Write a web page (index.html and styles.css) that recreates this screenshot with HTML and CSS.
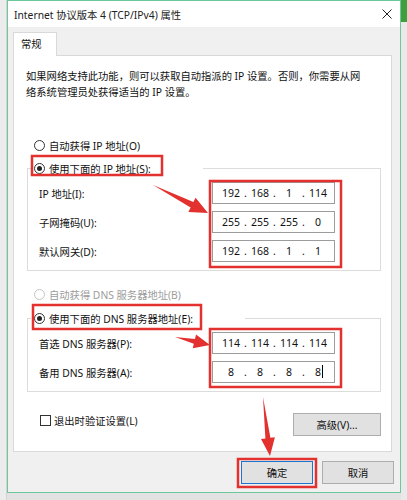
FILE: index.html
```html
<!DOCTYPE html>
<html lang="zh-CN">
<head>
  <meta charset="UTF-8" />
  <title>Internet 协议版本 4 (TCP/IPv4) 属性</title>
  <link rel="stylesheet" href="styles.css">
</head>
<body>
  <!-- window behind the dialog, left edge -->
  <div class="desk-left"></div>

  <!-- DIALOG -->
  <div class="dialog">
    <div class="titlebar">
      <span class="title">Internet 协议版本 4 (TCP/IPv4) 属性</span>
      <svg class="close" width="10" height="10" viewBox="0 0 10 10">
        <path d="M0.5 0.5 L9.5 9.5 M9.5 0.5 L0.5 9.5" stroke="#222" stroke-width="1" fill="none"/>
      </svg>
    </div>

    <div class="tabs">
      <div class="tab">常规</div>
    </div>

    <div class="panel">
      <p class="intro">如果网络支持此功能，则可以获取自动指派的 IP 设置。否则，你需要从网<br>络系统管理员处获得适当的 IP 设置。</p>

      <div class="radio-row first"><span class="radio"></span>自动获得 IP 地址(O)</div>

      <fieldset class="group">
        <legend class="ip-legend"><span class="radio on"></span>使用下面的 IP 地址(S):</legend>
        <div class="field">
          <label>IP 地址(I):</label>
          <div class="ipbox"><span>192</span><i>.</i><span>168</span><i>.</i><span>1</span><i>.</i><span>114</span></div>
        </div>
        <div class="field">
          <label>子网掩码(U):</label>
          <div class="ipbox"><span>255</span><i>.</i><span>255</span><i>.</i><span>255</span><i>.</i><span>0</span></div>
        </div>
        <div class="field">
          <label>默认网关(D):</label>
          <div class="ipbox"><span>192</span><i>.</i><span>168</span><i>.</i><span>1</span><i>.</i><span>1</span></div>
        </div>
      </fieldset>

      <div class="radio-row disabled"><span class="radio"></span>自动获得 DNS 服务器地址(B)</div>

      <fieldset class="group dns">
        <legend class="dns-legend"><span class="radio on"></span>使用下面的 DNS 服务器地址(E):</legend>
        <div class="field">
          <label>首选 DNS 服务器(P):</label>
          <div class="ipbox"><span>114</span><i>.</i><span>114</span><i>.</i><span>114</span><i>.</i><span>114</span></div>
        </div>
        <div class="field">
          <label>备用 DNS 服务器(A):</label>
          <div class="ipbox"><span>8</span><i>.</i><span>8</span><i>.</i><span>8</span><i>.</i><span>8<b class="caret"></b></span></div>
        </div>
      </fieldset>

      <div class="panel-foot">
        <label class="check"><span class="box"></span>退出时验证设置(L)</label>
        <button class="btn wide">高级(V)...</button>
      </div>
    </div>

    <div class="actions">
      <button class="btn default">确定</button>
      <button class="btn">取消</button>
    </div>
  </div>

  <!-- window behind the dialog, right edge -->
  <div class="desk-right"><div class="green"></div></div>

  <!-- red annotations drawn over the screenshot -->
  <svg class="marks" width="407" height="500" viewBox="0 0 407 500">
    <g fill="none" stroke="#e3312f" stroke-width="2.5">
      <rect x="32" y="156" width="130" height="19"/>
      <rect x="210" y="181" width="131" height="86"/>
      <rect x="33" y="305" width="168" height="24"/>
      <rect x="210" y="329" width="131" height="58"/>
      <rect x="238" y="459" width="78" height="28"/>
    </g>
    <g fill="#e3312f">
      <polygon points="153,185 193.4,202.1 195.6,197.7 208,213 188.4,211.9 190.6,207.5"/>
      <polygon points="175,337 195,339 196,334.6 210,345 192.8,348.2 193.8,343.8"/>
      <polygon points="263,397 270.4,437.8 274.9,437.3 270,456 261,438.9 265.4,438.4"/>
    </g>
  </svg>
</body>
</html>
```

FILE: styles.css
```css
* {
  box-sizing: border-box;
}
body {
  margin: 0;
  width: 407px;
  height: 500px;
  overflow: hidden;
  position: relative;
  display: flex;
  align-items: flex-start;
  background-color: #e2e2e2;
  font-family: "Noto Sans", "Noto Sans CJK SC", sans-serif;
  font-size: 10.3px;
  color: #111;
}
.desk-left {
  width: 7px;
  height: 500px;
  background-color: #ececec;
  border-right: 1px solid #d4d4d4;
}
.desk-right {
  width: 6px;
  height: 500px;
  background-color: #e9e9e9;
}
.desk-right .green {
  height: 22px;
  background-color: #3f9f3f;
}

.dialog {
  width: 394px;
  height: 493px;
  border: 1px solid #6cc79a;
  background-color: #f0f0f0;
  display: flex;
  flex-direction: column;
}
.titlebar {
  height: 26px;
  background-color: #fff;
  display: flex;
  align-items: center;
  justify-content: space-between;
  padding: 0 8px 0 6px;
  flex-shrink: 0;
}
.title {
  font-size: 10.3px;
  color: #222;
}
.close {
  display: block;
}

.tabs {
  display: flex;
  padding: 5px 0 0 5px;
}
.tab {
  width: 44px;
  height: 24px;
  padding-left: 7px;
  line-height: 22px;
  background-color: #fff;
  border: 1px solid #d9d9d9;
  border-bottom: none;
  margin-bottom: -1px;
  position: relative;
  z-index: 1;
}

.panel {
  margin-left: 5px;
  width: 379px;
  height: 397px;
  background-color: #fff;
  border: 1px solid #d9d9d9;
  flex-shrink: 0;
}
.intro {
  margin: 0;
  padding: 12px 0 0 12px;
  line-height: 16px;
  white-space: nowrap;
}

.radio-row {
  display: flex;
  align-items: center;
  height: 20px;
  margin-left: 20px;
}
.radio-row.first {
  margin-top: 35px;
}
.radio-row.disabled {
  margin-top: 13px;
  color: #9c9c9c;
}
.radio {
  width: 11px;
  height: 11px;
  border: 1px solid #333;
  border-radius: 50%;
  background-color: #fff;
  margin-right: 4px;
  display: flex;
  align-items: center;
  justify-content: center;
  flex-shrink: 0;
}
.radio.on::after {
  content: "";
  width: 5px;
  height: 5px;
  border-radius: 50%;
  background-color: #222;
}
.radio-row.disabled .radio {
  border-color: #c4c4c4;
}

.group {
  margin: 3px 0 0 13px;
  width: 354px;
  padding: 4px 0 8px 0;
  border: 1px solid #dcdcdc;
  display: flex;
  flex-direction: column;
  gap: 7px;
}
.group.dns {
  margin-top: 4px;
}
.group legend {
  display: flex;
  align-items: center;
  height: 20px;
  padding: 0 0 0 3px;
  margin-left: 3px;
  background-color: #fff;
}
.ip-legend {
  width: 172px;
}
.dns-legend {
  width: 214px;
}

.field {
  display: grid;
  grid-template-columns: 173px 123px;
  align-items: center;
  padding-left: 11px;
}
.ipbox {
  height: 22px;
  border: 1px solid #9c9c9c;
  display: flex;
  align-items: center;
  padding-left: 7px;
  font-size: 10.5px;
  color: #111;
}
.ipbox span {
  width: 22px;
  text-align: center;
}
.ipbox i {
  width: 7px;
  text-align: center;
  font-style: normal;
}
.caret {
  display: inline-block;
  width: 1px;
  height: 13px;
  background-color: #000;
  margin-left: 1px;
  margin-right: -2px;
  vertical-align: -2px;
}

.panel-foot {
  display: flex;
  justify-content: space-between;
  align-items: flex-start;
  padding: 18px 10px 0 26px;
}
.check {
  display: flex;
  align-items: center;
  height: 20px;
}
.check .box {
  width: 11px;
  height: 11px;
  border: 1px solid #333;
  margin-right: 3px;
}

.btn {
  font-family: inherit;
  font-size: 10.3px;
  color: #111;
  width: 72px;
  height: 23px;
  padding: 0;
  background-color: #e1e1e1;
  border: 1px solid #adadad;
}
.btn.wide {
  width: 88px;
  margin-top: 3px;
}
.btn.default {
  border-color: #1b74d2;
}
.actions {
  display: flex;
  justify-content: flex-end;
  gap: 9px;
  padding: 9px 6px 0 0;
}

.marks {
  position: absolute;
  top: 0;
  left: 0;
  pointer-events: none;
}
```
